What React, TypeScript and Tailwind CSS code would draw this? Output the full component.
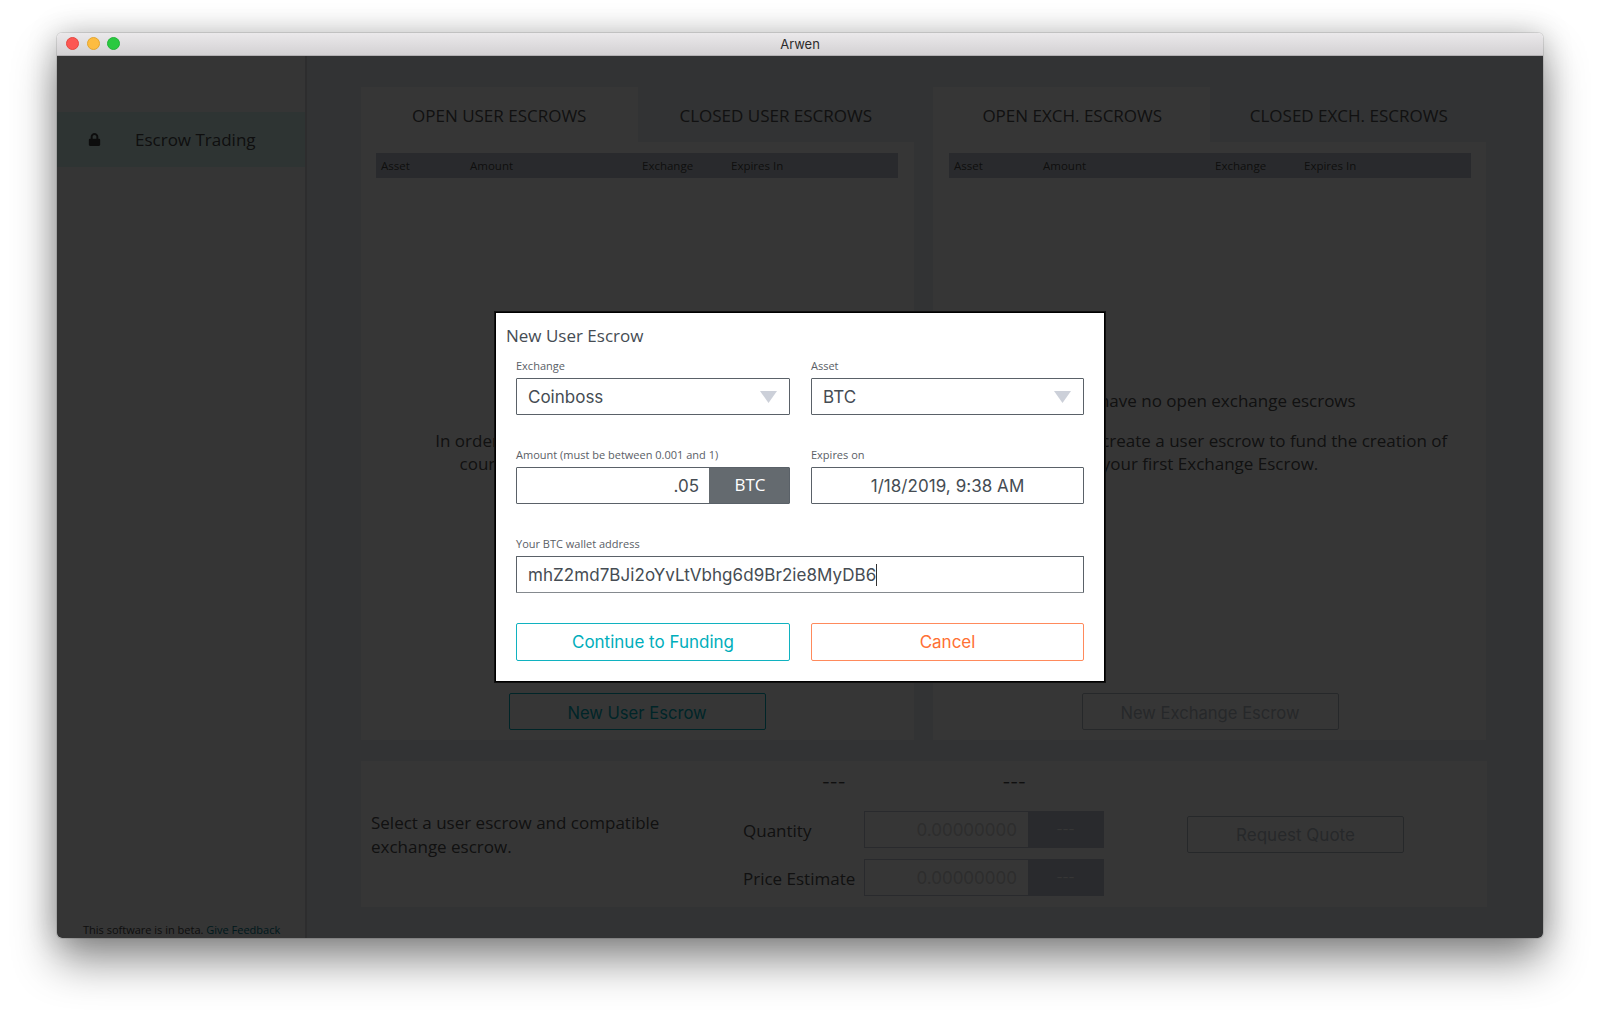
import { FaLock } from "react-icons/fa";

const sans = "font-['Open_Sans',sans-serif]";
const ui = "font-['Inter',sans-serif]";

const columns = [
  { label: "Asset", width: "w-[89px]" },
  { label: "Amount", width: "w-[172px]" },
  { label: "Exchange", width: "w-[89px]" },
  { label: "Expires In", width: "w-[89px]" },
];

function EscrowPanel({
  tabs,
  children,
  button,
  buttonClass,
  left,
}: {
  tabs: string[];
  children: React.ReactNode;
  button: string;
  buttonClass: string;
  left?: boolean;
}) {
  return (
    <section className={`flex flex-col w-[553px] h-[653px] ${left ? "mr-[19px]" : ""}`}>
      <div className="flex h-[55px] shrink-0">
        {tabs.map((tab, index) => (
          <div
            key={tab}
            className={`w-1/2 flex items-center justify-center text-[17px] text-[#505050] pt-[3px] ${left ? "" : "pl-[2px]"} ${sans} ${
              index === 0 ? "bg-white" : ""
            }`}
          >
            {tab}
          </div>
        ))}
      </div>
      <div className={`flex-1 bg-white pt-[11px] flex flex-col items-center ${left ? "pl-[15px] pr-[16px]" : "pl-[16px] pr-[15px]"}`}>
        <div className={`flex w-[522px] h-[25px] shrink-0 items-center bg-[#c3c8d2] pl-[5px] pt-[1px] text-[11.5px] text-[#484848] ${sans}`}>
          {columns.map((col) => (
            <div key={col.label} className={col.width}>
              {col.label}
            </div>
          ))}
        </div>
        <div className={`flex-1 flex flex-col items-center justify-center w-full text-center text-[17px] leading-[23px] text-[#505050] ${sans}`}>
          {children}
        </div>
        <div className={`mb-[10px] w-[257px] h-[37px] pt-[3px] shrink-0 flex items-center justify-center rounded-[2px] border text-[16.6px] ${ui} ${buttonClass}`}>
          {button}
        </div>
      </div>
    </section>
  );
}

function QuoteRow({ label, className }: { label: string; className?: string }) {
  return (
    <div className={`flex items-center ${className ?? ""}`}>
      <div className={`w-[121px] pt-[2px] text-[17px] text-[#505050] ${sans}`}>{label}</div>
      <div className="flex w-[240px] h-[37px] border border-[#c3c8d2]">
        <div className={`w-[163px] pt-[2px] flex items-center justify-end pr-[11px] text-[17px] text-[#d2d2d2] ${ui}`}>0.00000000</div>
        <div className={`flex-1 flex items-center justify-center bg-[#c3c8d2] text-[13px] text-white ${ui}`}>---</div>
      </div>
    </div>
  );
}

function Field({ label, children, className }: { label: string; children: React.ReactNode; className?: string }) {
  return (
    <div className={className}>
      <div className={`text-[11px] leading-[15px] mb-[5px] h-[15px] text-[#5a6066] ${sans}`}>{label}</div>
      {children}
    </div>
  );
}

function SelectBox({ value }: { value: string }) {
  return (
    <div className={`flex items-center justify-between h-[37px] border border-[#5a6168] rounded-[1px] pl-[11px] pr-[12px] text-[17px] leading-[22px] text-[#454c53] ${ui}`}>
      <span>{value}</span>
      <svg width="17" height="12" viewBox="0 0 17 12" aria-hidden="true">
        <path d="M0 0h17l-8.5 12z" fill="#ccd0d9" />
      </svg>
    </div>
  );
}

export default function App() {
  return (
    <div className="w-[1600px] h-[1020px] bg-white pt-[33px] pl-[57px] overflow-hidden">
      <div className="w-[1486px] h-[905px] rounded-[5px] flex flex-col overflow-hidden shadow-[0_24px_44px_rgba(0,0,0,0.42),0_0_30px_rgba(0,0,0,0.22),0_0_0_1px_rgba(0,0,0,0.1)]">
        {/* Title bar */}
        <div className="relative h-[23px] shrink-0 flex items-center justify-center pt-[2px] bg-gradient-to-b from-[#ebe9eb] to-[#d3d1d3] border-b border-[#b3b1b3]">
          <div className="absolute left-[9px] top-[4px] flex gap-[7.5px]">
            <span className="size-[13px] rounded-full bg-[#fc5753] border border-[#e5473f]" />
            <span className="size-[13px] rounded-full bg-[#fdbc40] border border-[#e3a52f]" />
            <span className="size-[13px] rounded-full bg-[#2ac940] border border-[#24b338]" />
          </div>
          <span className={`text-[13px] text-[#2b2b2b] ${ui}`}>Arwen</span>
        </div>

        <div className="relative flex-1 flex bg-[#e9eef3]">
          {/* Sidebar */}
          <aside className="w-[250px] shrink-0 flex flex-col bg-[#f8f8f8] border-r-[2px] border-[#d2d5d8]">
            <div className="mt-[56px] h-[55px] flex items-center bg-[#d7f5f1] text-[#484848]">
              <FaLock className="ml-[31px] text-[13px] text-[#404040]" />
              <span className={`ml-[34px] text-[17px] ${sans}`}>Escrow Trading</span>
            </div>
            <div className={`mt-auto pl-[26px] h-[16px] leading-[15px] text-[11px] text-[#484848] ${sans}`}>
              This software is in beta. <span className="text-[#00788a]">Give Feedback</span>
            </div>
          </aside>

          {/* Main */}
          <main className="flex-1 pl-[54px] pt-[31px]">
            <div className="flex">
              <EscrowPanel
                left
                tabs={["OPEN USER ESCROWS", "CLOSED USER ESCROWS"]}
                button="New User Escrow"
                buttonClass="border-[#00aebb] text-[#00aebb]"
              >
                <p className="mt-[-7px]">You have no open user escrows</p>
                <p className="mt-[17px]">
                  In order to create an escrow, you must have a valid
                  <br />
                  counterparty on the exchange of your choice
                </p>
              </EscrowPanel>
              <EscrowPanel
                tabs={["OPEN EXCH. ESCROWS", "CLOSED EXCH. ESCROWS"]}
                button="New Exchange Escrow"
                buttonClass="border-[#b5bcc4] text-[#b5bcc4]"
              >
                <p className="mt-[-7px]">You have no open exchange escrows</p>
                <p className="mt-[17px]">
                  You should first create a user escrow to fund the creation of
                  <br />
                  your first Exchange Escrow.
                </p>
              </EscrowPanel>
            </div>

            {/* Quote panel */}
            <section className="mt-[21px] w-[1126px] h-[146px] bg-white flex">
              <div className={`w-[382px] pl-[10px] pr-[80px] pt-[50px] text-[17px] leading-[24px] text-[#505050] ${sans}`}>
                Select a user escrow and compatible exchange escrow.
              </div>
              <div className="w-[444px]">
                <div className={`flex h-[50px] pb-[6px] items-center text-[17px] text-[#484848] ${ui}`}>
                  <span className="ml-[79px]">---</span>
                  <span className="ml-[157px]">---</span>
                </div>
                <QuoteRow label="Quantity" />
                <QuoteRow label="Price Estimate" className="mt-[11px]" />
              </div>
              <div className={`mt-[55px] w-[217px] h-[37px] pt-[2px] flex items-center justify-center rounded-[2px] border border-[#b5bcc4] text-[17px] text-[#b5bcc4] ${ui}`}>
                Request Quote
              </div>
            </section>
          </main>

          {/* Modal overlay */}
          <div className="absolute inset-0 bg-black/[0.79] flex items-center justify-center">
            <div className="w-[610px] h-[370px] bg-white border border-black shadow-[0_0_0_1px_#111] px-[10px] pt-[11px]">
              <h2 className={`text-[17px] leading-[24px] font-normal text-[#454c53] ${sans}`}>New User Escrow</h2>
              <div className="px-[10px] pt-[10px]">
                <div className="grid grid-cols-[274px_273px] gap-x-[21px] gap-y-[32px]">
                  <Field label="Exchange">
                    <SelectBox value="Coinboss" />
                  </Field>
                  <Field label="Asset">
                    <SelectBox value="BTC" />
                  </Field>
                  <Field label="Amount (must be between 0.001 and 1)">
                    <div className={`flex h-[37px] border border-[#5a6168] rounded-[1px] text-[17px] text-[#454c53] ${ui}`}>
                      <div className="flex-1 flex items-center justify-end pr-[10px] pt-[2px]">.05</div>
                      <div className={`w-[80px] pl-[2px] pb-[1px] flex items-center justify-center bg-[#646a6f] text-white ${sans}`}>BTC</div>
                    </div>
                  </Field>
                  <Field label="Expires on">
                    <div className={`flex h-[37px] pt-[2px] items-center justify-center border border-[#5a6168] rounded-[1px] text-[17px] tracking-[0.05px] text-[#454c53] ${ui}`}>
                      1/18/2019, 9:38 AM
                    </div>
                  </Field>
                  <Field label="Your BTC wallet address" className="col-span-2">
                    <div className={`flex h-[37px] items-center border border-[#5a6168] border-b-[#858a8f] rounded-[1px] pl-[11px] text-[17px] tracking-[0.06px] text-[#454c53] ${ui}`}>
                      <span className="border-r border-[#333] leading-[22px]">mhZ2md7BJi2oYvLtVbhg6d9Br2ie8MyDB6</span>
                    </div>
                  </Field>
                </div>
                <div className="grid grid-cols-[274px_273px] gap-x-[21px] mt-[30px]">
                  <div className={`h-[38px] pt-[1px] flex items-center justify-center border border-[#10b2c0] rounded-[2px] text-[17px] text-[#00aebb] ${ui}`}>
                    Continue to Funding
                  </div>
                  <div className={`h-[38px] pt-[1px] flex items-center justify-center border border-[#ff8a5c] rounded-[2px] text-[17px] text-[#ff7033] ${ui}`}>
                    Cancel
                  </div>
                </div>
              </div>
            </div>
          </div>
        </div>
      </div>
    </div>
  );
}
